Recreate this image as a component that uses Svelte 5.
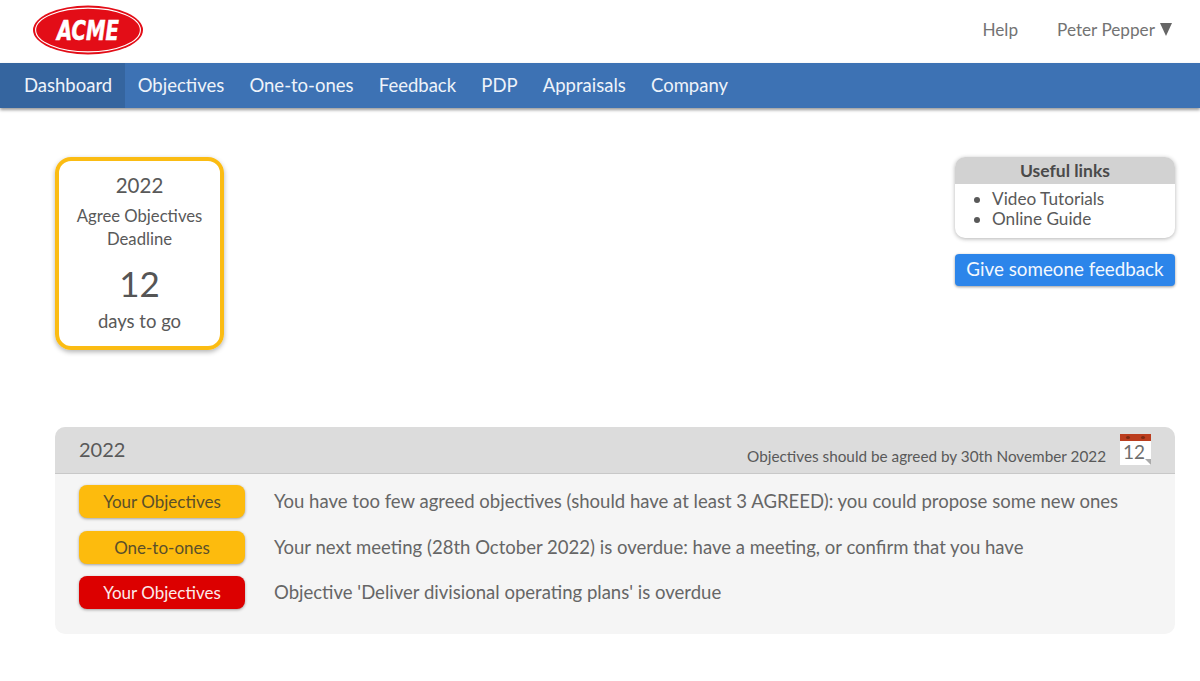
<script>
  const navItems = ['Dashboard', 'Objectives', 'One-to-ones', 'Feedback', 'PDP', 'Appraisals', 'Company'];
  const alerts = [
    { label: 'Your Objectives', level: 'amber', text: 'You have too few agreed objectives (should have at least 3 AGREED): you could propose some new ones' },
    { label: 'One-to-ones', level: 'amber', text: 'Your next meeting (28th October 2022) is overdue: have a meeting, or confirm that you have' },
    { label: 'Your Objectives', level: 'red', text: "Objective 'Deliver divisional operating plans' is overdue" }
  ];
</script>

<header class="top">
  <svg class="logo" width="112" height="50" viewBox="0 0 112 50" role="img" aria-label="ACME">
    <ellipse cx="56" cy="25" rx="55" ry="24.4" fill="#e30d17" />
    <ellipse cx="56" cy="25" rx="52.4" ry="21.9" fill="none" stroke="#fff" stroke-width="1.1" />
    <text x="56" y="35" text-anchor="middle" class="logo-text" textLength="62" lengthAdjust="spacingAndGlyphs">ACME</text>
  </svg>
  <div class="user">
    <span class="help">Help</span>
    <span class="name">Peter Pepper <span class="caret"></span></span>
  </div>
</header>

<nav class="nav">
  {#each navItems as item, i}
    <span class="nav-item" class:active={i === 0}>{item}</span>
  {/each}
</nav>

<main class="page">
  <div class="top-row">
    <section class="deadline">
      <div class="year">2022</div>
      <div class="what">Agree Objectives<br />Deadline</div>
      <div class="count">12</div>
      <div class="togo">days to go</div>
    </section>
    <aside class="side">
      <div class="links">
        <h3>Useful links</h3>
        <ul>
          <li>Video Tutorials</li>
          <li>Online Guide</li>
        </ul>
      </div>
      <button type="button" class="give">Give someone feedback</button>
    </aside>
  </div>

  <section class="panel">
    <div class="panel-head">
      <span class="panel-year">2022</span>
      <span class="panel-note">Objectives should be agreed by 30th November 2022</span>
      <span class="cal">
        <span class="cal-top"><i></i><i></i></span>
        <span class="cal-num">12</span>
        <span class="cal-fold"></span>
      </span>
    </div>
    <div class="panel-body">
      {#each alerts as a}
        <div class="row">
          <span class="pill {a.level}">{a.label}</span>
          <span class="msg">{a.text}</span>
        </div>
      {/each}
    </div>
  </section>
</main>

<style>
  :global(body) {
    background: #fff;
    color: #595959;
    font-family: "Lato", "Open Sans", sans-serif;
  }
  .top {
    height: 63px;
    display: flex;
    align-items: center;
    justify-content: space-between;
    padding: 0 28px 0 32px;
    box-sizing: border-box;
  }
  .logo {
    display: block;
    margin-bottom: 3px;
  }
  .logo-text {
    font-family: "DejaVu Sans", sans-serif;
    font-weight: 700;
    font-style: italic;
    font-size: 27px;
    fill: #fff;
    stroke: #fff;
    stroke-width: 0.6;
  }
  .user {
    display: flex;
    gap: 39px;
    font-size: 17.2px;
    color: #737373;
    margin-bottom: 5px;
  }
  .caret {
    display: inline-block;
    width: 0;
    height: 0;
    border-left: 6.5px solid transparent;
    border-right: 6.5px solid transparent;
    border-top: 13px solid #666;
    margin-left: 1px;
  }
  .nav {
    height: 45px;
    display: flex;
    background: #3d72b4;
    box-shadow: 0 2px 3px rgba(0, 0, 0, 0.4);
  }
  .nav-item {
    display: flex;
    align-items: center;
    padding: 0 12.6px 2px;
    color: #eef3fa;
    font-size: 18.5px;
  }
  .nav-item.active {
    background: #35659f;
    padding-left: 24px;
    padding-right: 13px;
  }
  .page {
    padding: 49px 25px 0 55px;
  }
  .top-row {
    display: flex;
    justify-content: space-between;
    align-items: flex-start;
  }
  .deadline {
    width: 169px;
    height: 193px;
    box-sizing: border-box;
    border: 4px solid #fbbc13;
    border-radius: 16px;
    box-shadow: 0 2px 5px rgba(0, 0, 0, 0.3);
    text-align: center;
    padding-top: 11px;
  }
  .year {
    font-size: 20.5px;
    line-height: 26px;
  }
  .what {
    font-size: 16.7px;
    line-height: 23px;
    margin-top: 7px;
  }
  .count {
    font-size: 35px;
    line-height: 42px;
    margin-top: 11px;
    color: #555;
  }
  .togo {
    font-size: 18.5px;
    line-height: 24px;
    margin-top: 5px;
  }
  .side {
    width: 220px;
  }
  .links {
    border-radius: 10px;
    overflow: hidden;
    box-shadow: 0 1px 4px rgba(0, 0, 0, 0.3);
    height: 81px;
  }
  .links h3 {
    margin: 0;
    height: 27px;
    line-height: 28px;
    background: #d2d2d2;
    text-align: center;
    font-size: 17.5px;
    font-weight: 700;
    color: #4a4a4a;
  }
  .links ul {
    margin: 0;
    padding: 5px 0 0 37px;
    font-size: 17.2px;
    line-height: 20px;
  }
  .give {
    display: block;
    width: 100%;
    height: 32px;
    margin-top: 16px;
    padding: 0 0 3px;
    border: none;
    border-radius: 4px;
    background: #2c85ea;
    color: #f3f8fe;
    font-family: inherit;
    font-size: 18.8px;
    box-shadow: 0 1px 3px rgba(0, 0, 0, 0.4);
  }
  .panel {
    margin-top: 77px;
    border-radius: 10px;
    overflow: hidden;
    background: #f5f5f5;
  }
  .panel-head {
    height: 47px;
    box-sizing: border-box;
    background: #dcdcdc;
    border-bottom: 1px solid #c8c8c8;
    display: flex;
    align-items: center;
    padding: 0 24px;
  }
  .panel-year {
    font-size: 20px;
    margin-bottom: 2px;
  }
  .panel-note {
    margin-left: auto;
    margin-right: 14px;
    margin-top: 11px;
    font-size: 15.3px;
  }
  .cal {
    position: relative;
    display: block;
    width: 31px;
    height: 31px;
    background: #fff;
    margin-top: -2px;
    text-align: center;
  }
  .cal-top {
    display: flex;
    justify-content: space-between;
    align-items: center;
    padding: 0 6px;
    height: 7px;
    background: #bb3d1e;
  }
  .cal-top i {
    width: 4px;
    height: 3px;
    border-radius: 50%;
    background: #7d2a14;
  }
  .cal-num {
    display: block;
    font-size: 19px;
    line-height: 21px;
    padding-right: 3px;
    color: #6e6e6e;
  }
  .cal-fold {
    position: absolute;
    right: 0;
    bottom: 0;
    border-left: 6px solid transparent;
    border-top: 6px solid #aaa;
  }
  .panel-body {
    height: 160px;
    padding: 11px 24px 0;
    box-sizing: border-box;
    display: flex;
    flex-direction: column;
    gap: 12.5px;
  }
  .row {
    display: flex;
    align-items: center;
    gap: 29px;
  }
  .pill {
    flex: none;
    width: 166px;
    height: 33px;
    line-height: 33px;
    border-radius: 8px;
    text-align: center;
    font-size: 17px;
    box-shadow: 0 1px 3px rgba(0, 0, 0, 0.35);
  }
  .pill.amber {
    background: #fdbb0d;
    color: #5a4f2a;
  }
  .pill.red {
    background: #dc0000;
    color: #fbeaea;
  }
  .msg {
    font-size: 18.55px;
    color: #666;
    margin-top: -1px;
  }
</style>
